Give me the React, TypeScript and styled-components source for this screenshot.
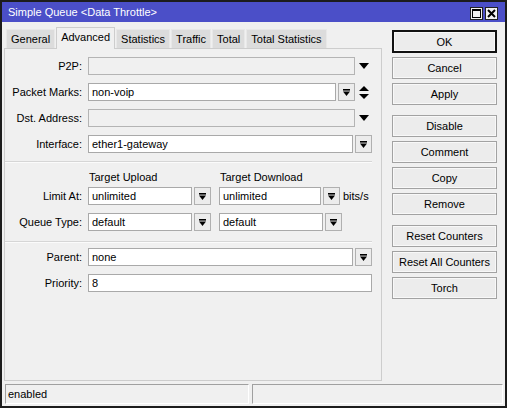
import React from 'react';
import styled, { createGlobalStyle } from 'styled-components';

const GlobalStyle = createGlobalStyle`
  html, body {
    margin: 0;
    padding: 0;
    background: #f0f0f0;
  }
  body {
    font-family: "Liberation Sans", Arial, sans-serif;
    font-size: 11px;
    color: #000;
  }
  * {
    box-sizing: border-box;
  }
`;

const Window = styled.div`
  width: 507px;
  height: 408px;
  border: 2px solid #1c1c1c;
  background: #f0f0f0;
  display: flex;
  flex-direction: column;
`;
const TitleBar = styled.div`
  height: 20px;
  flex-shrink: 0;
  background: #4b4fc8;
  color: #fff;
  font-size: 11px;
  display: flex;
  align-items: center;
  justify-content: space-between;
  padding: 0 7px 0 6px;
`;
const TitleButtons = styled.div`
  display: flex;
  gap: 2px;
  margin-top: 2px;
`;
const TitleBtn = styled.div`
  width: 13px;
  height: 13px;
  background: #f2f2f2;
  border: 1px solid #222;
  display: flex;
  align-items: center;
  justify-content: center;
`;
const Main = styled.div`
  flex: 1;
  display: flex;
  padding: 5px 8px 0 2px;
  min-height: 0;
`;
const TabArea = styled.div`
  width: 378px;
  display: flex;
  flex-direction: column;
`;
const TabBar = styled.div`
  height: 21px;
  display: flex;
  align-items: flex-end;
  padding-left: 2px;
`;
const Tab = styled.div<{ $active?: boolean }>`
  height: ${p => (p.$active ? '22px' : '19px')};
  padding: 0 4px;
  display: flex;
  align-items: center;
  background: ${p => (p.$active ? '#f0f0f0' : '#dcdcdc')};
  border: 1px solid ${p => (p.$active ? '#cdcdcd' : '#e8e8e8')};
  border-bottom: none;
  margin-right: 1px;
  margin-bottom: ${p => (p.$active ? '-1px' : '0')};
  position: relative;
  z-index: ${p => (p.$active ? 1 : 0)};
  padding-bottom: ${p => (p.$active ? '3px' : '0')};
  white-space: nowrap;
`;
const Panel = styled.div`
  flex: 1;
  border: 1px solid #cdcdcd;
  background: #f0f0f0;
  padding: 8px 9px 0 0;
`;
const Row = styled.div<{ $mb?: number }>`
  display: flex;
  align-items: center;
  height: 18px;
  margin-bottom: ${p => (p.$mb ?? 8)}px;
`;
const Label = styled.div`
  width: 77px;
  margin-right: 6px;
  text-align: right;
  flex-shrink: 0;
  white-space: nowrap;
`;
const FieldBox = styled.div`
  width: 284px;
  display: flex;
  align-items: center;
  height: 18px;
`;
const Input = styled.div<{ $disabled?: boolean; $w?: number }>`
  height: 18px;
  ${p => (p.$w ? `width: ${p.$w}px;` : 'flex: 1;')}
  background: ${p => (p.$disabled ? '#f0f0f0' : '#fff')};
  border: 1px solid ${p => (p.$disabled ? '#b4b4b4' : '#a9a9a9')};
  padding: 0 3px;
  display: flex;
  align-items: center;
  white-space: nowrap;
  overflow: hidden;
`;
const DropBtn = styled.div`
  width: 17px;
  height: 18px;
  margin-left: 2px;
  flex-shrink: 0;
  border: 1px solid #b0b0b0;
  background: #ececec;
  display: flex;
  align-items: center;
  justify-content: center;
`;
const Trail = styled.div`
  width: 17px;
  height: 18px;
  flex-shrink: 0;
  display: flex;
  align-items: center;
  justify-content: center;
`;
const Separator = styled.div<{ $mb: number }>`
  height: 2px;
  border-top: 1px solid #d6d6d6;
  border-bottom: 1px solid #fbfbfb;
  margin-bottom: ${p => p.$mb}px;
`;
const HeaderRow = styled.div`
  display: flex;
  height: 14px;
  align-items: center;
  margin: 7px 0 3px 83px;
`;
const HeaderCell = styled.div<{ $w: number }>`
  width: ${p => p.$w}px;
  padding-left: 1px;
`;
const Group = styled.div`
  display: flex;
  align-items: center;
  margin-right: 8px;
`;
const Unit = styled.span`
  margin-left: -5px;
`;
const ButtonColumn = styled.div`
  width: 106px;
  margin-left: 10px;
  padding-top: 3px;
  display: flex;
  flex-direction: column;
`;
const Button = styled.div<{ $primary?: boolean; $gap?: number }>`
  height: ${p => (p.$primary ? '23px' : '22px')};
  margin-bottom: ${p => p.$gap ?? 4}px;
  border: ${p => (p.$primary ? '2px solid #111' : '1px solid #a2a2a2')};
  background: #ececec;
  box-shadow: inset 0 0 0 1px #f8f8f8;
  display: flex;
  align-items: center;
  justify-content: center;
  font-size: 11px;
`;
const StatusBar = styled.div`
  height: 20px;
  margin: 3px 0 2px;
  padding: 0 2px 0 3px;
  display: flex;
  gap: 3px;
  flex-shrink: 0;
`;
const StatusBox = styled.div<{ $w?: number }>`
  ${p => (p.$w ? `width: ${p.$w}px;` : 'flex: 1;')}
  border-top: 1px solid #a0a0a0;
  border-left: 1px solid #a0a0a0;
  border-bottom: 1px solid #fff;
  border-right: 1px solid #fff;
  padding-left: 2px;
  display: flex;
  align-items: center;
`;

const DropIcon = () => (
  <svg width="9" height="9" viewBox="0 0 9 9">
    <rect x="1" y="1" width="7" height="1.6" fill="#000" />
    <polygon points="1,3.6 8,3.6 4.5,8" fill="#000" />
  </svg>
);
const DownTri = () => (
  <svg width="10" height="6" viewBox="0 0 10 6">
    <polygon points="0,0 10,0 5,6" fill="#000" />
  </svg>
);
const UpDown = () => (
  <svg width="10" height="13" viewBox="0 0 10 13">
    <polygon points="5,0 10,5 0,5" fill="#000" />
    <polygon points="0,8 10,8 5,13" fill="#000" />
  </svg>
);

const App = () => {
  return (
    <>
      <GlobalStyle />
      <Window>
        <TitleBar>
          <span>Simple Queue &lt;Data Throttle&gt;</span>
          <TitleButtons>
            <TitleBtn>
              <svg width="9" height="9" viewBox="0 0 9 9">
                <rect x="0.5" y="0.5" width="8" height="8" fill="none" stroke="#000" />
                <rect x="0" y="0" width="9" height="2" fill="#000" />
              </svg>
            </TitleBtn>
            <TitleBtn>
              <svg width="9" height="9" viewBox="0 0 9 9">
                <path d="M1 1 L8 8 M8 1 L1 8" stroke="#000" strokeWidth="2" />
              </svg>
            </TitleBtn>
          </TitleButtons>
        </TitleBar>
        <Main>
          <TabArea>
            <TabBar>
              <Tab>General</Tab>
              <Tab $active>Advanced</Tab>
              <Tab>Statistics</Tab>
              <Tab>Traffic</Tab>
              <Tab>Total</Tab>
              <Tab>Total Statistics</Tab>
            </TabBar>
            <Panel>
              <Row>
                <Label>P2P:</Label>
                <FieldBox>
                  <Input $disabled />
                  <Trail><DownTri /></Trail>
                </FieldBox>
              </Row>
              <Row>
                <Label>Packet Marks:</Label>
                <FieldBox>
                  <Input>non-voip</Input>
                  <DropBtn><DropIcon /></DropBtn>
                  <Trail><UpDown /></Trail>
                </FieldBox>
              </Row>
              <Row>
                <Label>Dst. Address:</Label>
                <FieldBox>
                  <Input $disabled />
                  <Trail><DownTri /></Trail>
                </FieldBox>
              </Row>
              <Row>
                <Label>Interface:</Label>
                <FieldBox>
                  <Input>ether1-gateway</Input>
                  <DropBtn><DropIcon /></DropBtn>
                </FieldBox>
              </Row>
              <Separator $mb={0} />
              <HeaderRow>
                <HeaderCell $w={131}>Target Upload</HeaderCell>
                <HeaderCell $w={120}>Target Download</HeaderCell>
              </HeaderRow>
              <Row $mb={8}>
                <Label>Limit At:</Label>
                <Group>
                  <Input $w={104}>unlimited</Input>
                  <DropBtn><DropIcon /></DropBtn>
                </Group>
                <Group>
                  <Input $w={102}>unlimited</Input>
                  <DropBtn><DropIcon /></DropBtn>
                </Group>
                <Unit>bits/s</Unit>
              </Row>
              <Row $mb={10}>
                <Label>Queue Type:</Label>
                <Group>
                  <Input $w={104}>default</Input>
                  <DropBtn><DropIcon /></DropBtn>
                </Group>
                <Group>
                  <Input $w={104}>default</Input>
                  <DropBtn><DropIcon /></DropBtn>
                </Group>
              </Row>
              <Separator $mb={5} />
              <Row>
                <Label>Parent:</Label>
                <FieldBox>
                  <Input>none</Input>
                  <DropBtn><DropIcon /></DropBtn>
                </FieldBox>
              </Row>
              <Row>
                <Label>Priority:</Label>
                <FieldBox>
                  <Input>8</Input>
                </FieldBox>
              </Row>
            </Panel>
          </TabArea>
          <ButtonColumn>
            <Button $primary>OK</Button>
            <Button>Cancel</Button>
            <Button $gap={10}>Apply</Button>
            <Button>Disable</Button>
            <Button>Comment</Button>
            <Button>Copy</Button>
            <Button $gap={10}>Remove</Button>
            <Button>Reset Counters</Button>
            <Button>Reset All Counters</Button>
            <Button>Torch</Button>
          </ButtonColumn>
        </Main>
        <StatusBar>
          <StatusBox $w={244}>enabled</StatusBox>
          <StatusBox />
        </StatusBar>
      </Window>
    </>
  );
};

export default App;
